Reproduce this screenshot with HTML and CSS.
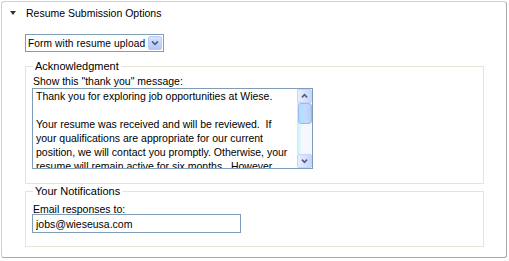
FILE: index.html
```html
<!DOCTYPE html>
<html lang="en">
<head>
    <meta charset="UTF-8">
    <meta name="viewport" content="width=device-width, initial-scale=1.0">
    <title>Resume Submission Options</title>
    <link rel="stylesheet" href="styles.css">
</head>
<body>
    <div class="panel">
        <div class="panel-header">
            <span class="toggle"></span>
            <span class="panel-title">Resume Submission Options</span>
        </div>

        <div class="panel-body">
            <div class="select-wrap">
                <select class="select">
                    <option>Form with resume upload</option>
                    <option>Form only</option>
                    <option>Resume upload only</option>
                </select>
                <span class="select-arrow">
                    <svg viewBox="0 0 14 14">
                        <path d="M3.5 5l3.5 3.5 3.5-3.5"></path>
                    </svg>
                </span>
            </div>

            <fieldset class="group group-ack">
                <legend>Acknowledgment</legend>
                <label class="field-label" for="thanks">Show this "thank you" message:</label>
                <div class="textarea-wrap">
                    <textarea id="thanks" class="textarea" spellcheck="false">Thank you for exploring job opportunities at Wiese.

Your resume was received and will be reviewed.  If
your qualifications are appropriate for our current
position, we will contact you promptly. Otherwise, your
resume will remain active for six months.  However,</textarea>
                    <div class="scrollbar">
                        <span class="scroll-btn">
                            <svg viewBox="0 0 14 14"><path d="M4 8.5l3-3 3 3"></path></svg>
                        </span>
                        <span class="scroll-track">
                            <span class="scroll-thumb"></span>
                        </span>
                        <span class="scroll-btn">
                            <svg viewBox="0 0 14 14"><path d="M4 5.5l3 3 3-3"></path></svg>
                        </span>
                    </div>
                </div>
            </fieldset>

            <fieldset class="group group-notify">
                <legend>Your Notifications</legend>
                <label class="field-label" for="email">Email responses to:</label>
                <input id="email" class="input" type="text" value="jobs@wieseusa.com">
            </fieldset>
        </div>
    </div>
</body>
</html>
```

FILE: styles.css
```css
* {
    margin: 0;
    padding: 0;
    box-sizing: border-box;
}

body {
    background: #fff;
    font-family: "Liberation Sans", Arial, sans-serif;
    font-size: 10.5px;
    color: #000;
}

.panel {
    width: 506px;
    height: 257px;
    margin: 1px 0 0 1px;
    border: 1px solid #cfcfcf;
    border-right-color: #a8a8a8;
    border-bottom-color: #a8a8a8;
    border-radius: 3px;
}

.panel-header {
    display: flex;
    align-items: center;
    height: 24px;
    padding: 0 0 2px 8px;
}

.toggle {
    width: 0;
    height: 0;
    border-left: 3px solid transparent;
    border-right: 3px solid transparent;
    border-top: 4px solid #333;
    margin-right: 10px;
}

.panel-body {
    padding: 8px 22px 0 23px;
}

.select-wrap {
    position: relative;
    width: 139px;
    height: 18px;
}

.select {
    appearance: none;
    width: 100%;
    height: 100%;
    border: 1px solid #7f9db9;
    background: #fff;
    font: inherit;
    font-size: 10.2px;
    letter-spacing: 0.1px;
    padding: 0 0 0 2px;
    color: #000;
}

.select-arrow {
    position: absolute;
    top: 2px;
    right: 2px;
    width: 14px;
    height: 14px;
    border: 1px solid #b9cbf3;
    border-radius: 2px;
    background: linear-gradient(#d9e4fd, #b3c8f7);
    display: flex;
    pointer-events: none;
}

.select-arrow svg,
.scroll-btn svg {
    width: 100%;
    height: 100%;
    fill: none;
    stroke: #4d6185;
    stroke-width: 2;
}

.group {
    border: 1px solid #e6e4d6;
    padding: 0 6px 0 6px;
}

.group legend {
    padding: 0 2px;
    margin-left: 1px;
    font-size: 11px;
    line-height: 12px;
}

.group-ack {
    margin-top: 8px;
    height: 124px;
}

.group-notify {
    margin-top: 1px;
    height: 62px;
}

.field-label {
    display: block;
    margin: 3px 0 0 1px;
    line-height: 13px;
}

.group-notify .field-label {
    margin-top: 7px;
    line-height: 10px;
}

.textarea-wrap {
    display: flex;
    width: 281px;
    height: 81px;
    border: 1px solid #7f9db9;
}

.textarea {
    flex: 1;
    border: none;
    resize: none;
    overflow: hidden;
    white-space: pre;
    font: inherit;
    line-height: 14px;
    padding: 0 0 0 3px;
    outline: none;
}

.scrollbar {
    width: 15px;
    display: flex;
    flex-direction: column;
    background: #f4f4fe;
}

.scroll-btn {
    display: flex;
    height: 14px;
    border: 1px solid #c6d3f5;
    border-radius: 2px;
    background: linear-gradient(90deg, #e8eefe, #c8d6fb);
}

.scroll-track {
    flex: 1;
    background: linear-gradient(90deg, #bff0ff 0, #f4f8ff 5px, #f8f8ff);
}

.scroll-thumb {
    display: block;
    height: 21px;
    margin: 0 0 0 1px;
    border: 1px solid #9bb8f2;
    border-radius: 3px;
    background: linear-gradient(90deg, #a9e4ff, #c5d7fc 60%, #b6cdfa);
}

.input {
    display: block;
    width: 209px;
    height: 19px;
    border: 1px solid #7f9db9;
    font: inherit;
    padding: 0 3px;
    outline: none;
}
```
